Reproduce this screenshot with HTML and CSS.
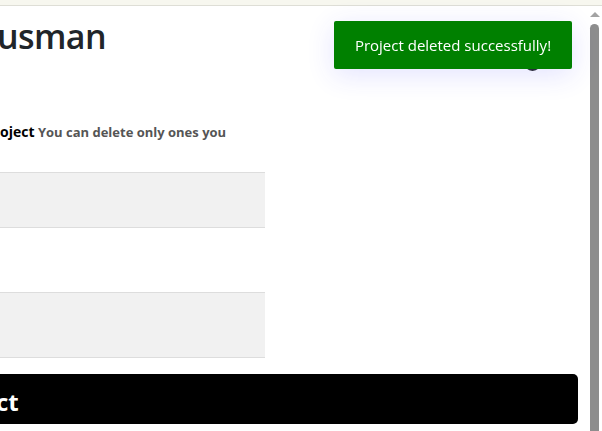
FILE: index.html
```html
<!DOCTYPE html>
<html>
<head>
<meta charset="utf-8">
<link rel="stylesheet" href="styles.css">
</head>
<body>
<div class="topbar"></div>
<div class="frame">
  <main class="page">
    <h1 class="title">usman</h1>
    <p class="hint"><span class="strong">oject</span> <span class="muted">You can delete only ones you</span></p>
    <div class="field"></div>
    <div class="field tall"></div>
    <button class="submit">ct</button>
    <span class="avatar"></span>
  </main>
  <div class="scrollbar">
    <span class="arrow"></span>
    <span class="thumb"></span>
  </div>
</div>
<div class="toast">Project deleted successfully!</div>
</body>
</html>
```
FILE: styles.css
```css
* { box-sizing: border-box; }
html, body { margin: 0; padding: 0; height: 100%; overflow: hidden; background: #fff; }
body { font-family: "Open Sans", "Noto Sans", sans-serif; display: flex; flex-direction: column; }
.topbar { height: 6px; background: #f7f7ef; border-bottom: 1px solid #deded6; flex: none; }
.frame { flex: 1; display: flex; min-height: 0; }
.page { flex: 1; position: relative; display: flex; flex-direction: column; align-items: flex-start; padding-right: 11px; }
.title { margin: 8px 0 0 -3px; font-size: 34px; font-weight: 600; color: #212529; line-height: 44px; letter-spacing: -0.6px; }
.hint { margin: 65px 0 0 0; font-size: 13px; font-weight: 700; line-height: 18px; }
.strong { color: #000; font-size: 14px; }
.muted { color: #555; }
.field { width: 265px; height: 56px; background: #f1f1f1; border-top: 1px solid #dddddd; border-bottom: 1px solid #dddddd; margin-top: 31px; }
.field.tall { height: 66px; margin-top: 64px; }
.submit { align-self: stretch; margin-top: 16px; height: 50px; background: #000; color: #fff; border: 0; border-radius: 0 5px 5px 0; font-family: "Open Sans", sans-serif; font-weight: 700; font-size: 24px; text-align: left; padding: 6px 0 0 0; line-height: 40px; text-indent: -4px; }
.avatar { position: absolute; left: 524px; top: 48px; width: 17px; height: 17px; border-radius: 50%; background: #2b2b2b; }
.scrollbar { width: 13px; flex: none; display: flex; flex-direction: column; align-items: center; padding-top: 6px; padding-right: 2px; }
.arrow { width: 0; height: 0; border-left: 5px solid transparent; border-right: 5px solid transparent; border-bottom: 5px solid #a3a3a3; margin-top: 0; }
.thumb { width: 9px; flex: 1; margin-top: 7px; background: #8d8d8d; border-radius: 5px 5px 0 0; }
.toast { position: fixed; top: 21px; left: 334px; width: 238px; height: 48px; background: #008000; color: #fff; font-size: 15px; display: flex; align-items: center; justify-content: center; border-radius: 2px; box-shadow: 0 6px 28px rgba(60, 60, 255, 0.14); z-index: 2; }
```
